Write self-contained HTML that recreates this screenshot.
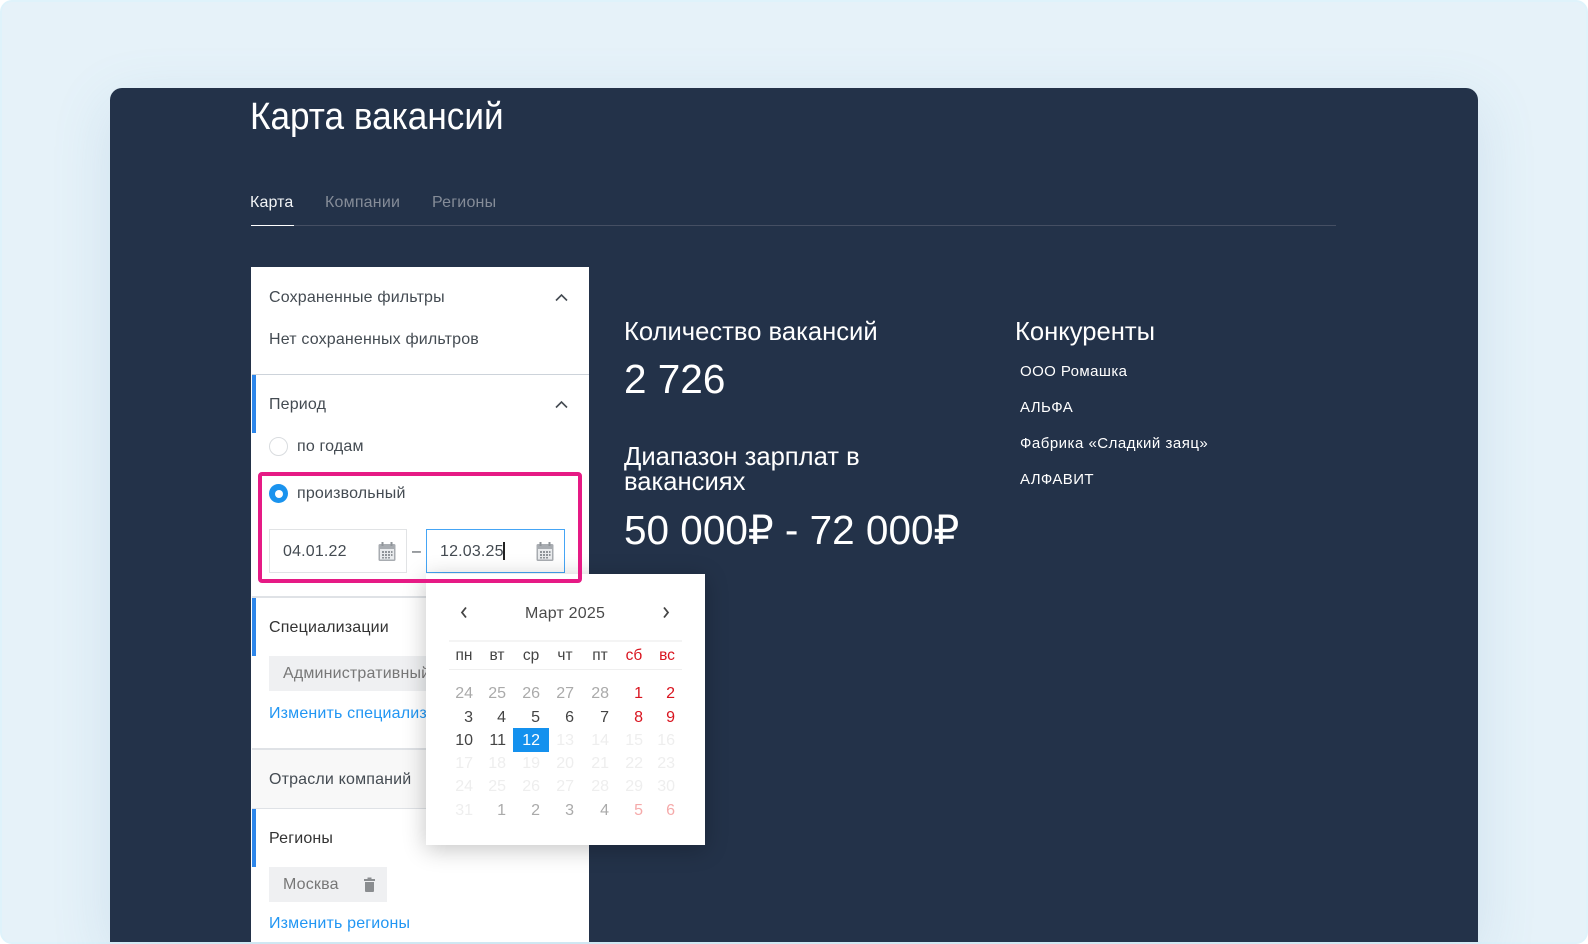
<!DOCTYPE html>
<html lang="ru"><head><meta charset="utf-8"><title>Карта вакансий</title>
<style>
html,body{margin:0;padding:0;width:1588px;height:944px;overflow:hidden;background:#fff}
body{font-family:"Liberation Sans",sans-serif;position:relative}
.abs,.t{position:absolute}
.t{white-space:nowrap;line-height:20px}
#outer{position:absolute;left:0;top:0;width:1584px;height:940px;background:#e6f2f9;border:2px solid #dff3fb;border-radius:12px;overflow:hidden}
#card{position:absolute;left:110px;top:88px;width:1368px;height:854px;background:#233249;border-radius:12px 12px 0 0;box-shadow:0 16px 60px rgba(90,140,180,.16)}
#panel{position:absolute;left:251px;top:267px;width:338px;height:675px;background:#fff;overflow:hidden}
.g{font-size:16px;color:#444b52;letter-spacing:.17px;margin-top:1px}
.w{color:#fff}
.bar{position:absolute;left:252px;width:4px;background:#2d86ea}
.line{position:absolute;left:252px;width:337px;background:#dfe2e6}
.chip{position:absolute;background:#eff0f2}
.inp{position:absolute;top:529px;height:42px;background:#fff;border:1px solid #e1e3e5}
.lnk{color:#2196f3;letter-spacing:.17px;margin-top:1px}
#pop{position:absolute;left:426px;top:574px;width:279px;height:271px;background:#fff;box-shadow:0 4px 22px rgba(0,0,0,.24)}
#pink{position:absolute;left:258px;top:472px;width:316px;height:103px;border:4px solid #e61a85;border-radius:4px}
.r{position:absolute;width:40px;text-align:right;font-size:16px;line-height:20px;margin-top:1px}
.h{position:absolute;width:44px;text-align:center;font-size:15.500px;line-height:20px;top:646px;color:#444}
.a{color:#aaa}.b{color:#444}.x{color:#d9141f}.d{color:#eeeeee}.p{color:#f5aaaa}
.c1{left:433px}.c2{left:466px}.c3{left:500px}.c4{left:534px}.c5{left:569px}.c6{left:603px}.c7{left:635px}
.y1{top:683px}.y2{top:707px}.y3{top:730px}.y4{top:753px}.y5{top:776px}.y6{top:800px}
.li{font-size:15px;letter-spacing:.42px}
.big{font-size:40.500px;line-height:48px}
.hd{font-size:25.600px;line-height:24px}
</style></head><body>
<div id="outer"></div>
<div id="card"></div>

<div class="t w" style="left:250px;top:96.500px;font-size:38px;line-height:40px;transform-origin:0 50%;transform:scaleX(.925)">Карта вакансий</div>
<div class="t" style="left:250px;top:193px;font-size:16px;letter-spacing:.12px;color:#f2f4f6">Карта</div>
<div class="t" style="left:325px;top:193px;font-size:16px;letter-spacing:.2px;color:#858c98">Компании</div>
<div class="t" style="left:432px;top:193px;font-size:16px;letter-spacing:.2px;color:#858c98">Регионы</div>
<div class="abs" style="left:251px;top:225px;width:1085px;height:1px;background:#454f63"></div>
<div class="abs" style="left:251px;top:225px;width:43px;height:1px;background:#fff"></div>

<div class="t w hd" style="left:624px;top:320px">Количество вакансий</div>
<div class="t w big" style="left:624px;top:355px">2 726</div>
<div class="t w hd" style="left:624px;top:445px;line-height:25px">Диапазон зарплат в<br>вакансиях</div>
<div class="t w big" style="left:624px;top:506px">50 000₽ - 72 000₽</div>
<div class="t w hd" style="left:1015px;top:320px">Конкуренты</div>
<div class="t w li" style="left:1020px;top:362px">ООО Ромашка</div>
<div class="t w li" style="left:1020px;top:398px">АЛЬФА</div>
<div class="t w li" style="left:1020px;top:434px;letter-spacing:.5px">Фабрика «Сладкий заяц»</div>
<div class="t w li" style="left:1020px;top:470px">АЛФАВИТ</div>

<div id="panel"></div>
<div class="abs" style="left:252px;top:750px;width:337px;height:58px;background:#f8f8f8"></div>
<div class="line" style="top:374px;height:1px;background:#cdd3da"></div>
<div class="line" style="top:596px;height:2px"></div>
<div class="line" style="top:748px;height:2px"></div>
<div class="line" style="top:808px;height:1px"></div>
<div class="bar" style="top:375px;height:58px"></div>
<div class="bar" style="top:598px;height:58px"></div>
<div class="bar" style="top:809px;height:58px"></div>

<div class="t g" style="left:269px;top:287px">Сохраненные фильтры</div>
<svg class="abs" style="left:555px;top:293px" width="13" height="9" viewBox="0 0 13 9"><path d="M1 7.500 6.500 2 12 7.500" fill="none" stroke="#444b52" stroke-width="1.600"/></svg>
<div class="t g" style="left:269px;top:329px">Нет сохраненных фильтров</div>
<div class="t g" style="left:269px;top:394px">Период</div>
<svg class="abs" style="left:555px;top:400px" width="13" height="9" viewBox="0 0 13 9"><path d="M1 7.500 6.500 2 12 7.500" fill="none" stroke="#444b52" stroke-width="1.600"/></svg>

<div class="abs" style="left:269px;top:437px;width:17px;height:17px;border:1px solid #d9dcdf;border-radius:50%;background:#fff"></div>
<div class="t g" style="left:297px;top:436px">по годам</div>
<div class="abs" style="left:269px;top:484px;width:19px;height:19px;border-radius:50%;background:#1a93ee"></div>
<div class="abs" style="left:274.500px;top:489.500px;width:8px;height:8px;border-radius:50%;background:#fff"></div>
<div class="t g" style="left:297px;top:483px">произвольный</div>

<div class="inp" style="left:269px;width:136px"></div>
<div class="t g" style="left:283px;top:541px">04.01.22</div>
<svg class="abs" style="left:378px;top:542px" width="18" height="19" viewBox="0 0 18 19"><rect x=".5" y="2" width="17" height="17" rx="1.500" fill="#a8acb1"/><rect x="2" y="7" width="14" height="10.500" fill="#e9ebed"/><rect x="3.500" y="0" width="2" height="4" fill="#8f9499"/><rect x="12.500" y="0" width="2" height="4" fill="#8f9499"/><path d="M4 9h2v2H4zM7 9h2v2H7zM10 9h2v2h-2zM13 9h1.500v2H13zM4 12h2v2H4zM7 12h2v2H7zM10 12h2v2h-2zM13 12h1.500v2H13zM4 15h2v1.500H4zM7 15h2v1.500H7zM10 15h2v1.500h-2z" fill="#8f9499"/></svg>
<div class="t g" style="left:412px;top:541px;font-size:16px">–</div>
<div class="inp" style="left:426px;width:137px;border-color:#45a5f5"></div>
<div class="t g" style="left:440px;top:541px">12.03.25</div>
<div class="abs" style="left:503px;top:542px;width:1.500px;height:18px;background:#222"></div>
<svg class="abs" style="left:536px;top:542px" width="18" height="19" viewBox="0 0 18 19"><rect x=".5" y="2" width="17" height="17" rx="1.500" fill="#a8acb1"/><rect x="2" y="7" width="14" height="10.500" fill="#e9ebed"/><rect x="3.500" y="0" width="2" height="4" fill="#8f9499"/><rect x="12.500" y="0" width="2" height="4" fill="#8f9499"/><path d="M4 9h2v2H4zM7 9h2v2H7zM10 9h2v2h-2zM13 9h1.500v2H13zM4 12h2v2H4zM7 12h2v2H7zM10 12h2v2h-2zM13 12h1.500v2H13zM4 15h2v1.500H4zM7 15h2v1.500H7zM10 15h2v1.500h-2z" fill="#8f9499"/></svg>

<div class="t g" style="left:269px;top:617px;color:#333">Специализации</div>
<div class="chip" style="left:269px;top:656px;width:170px;height:35px"></div>
<div class="t" style="left:283px;top:664px;font-size:16px;letter-spacing:.17px;color:#777">Административный</div>
<div class="t lnk" style="left:269px;top:703px;font-size:16px">Изменить специализации</div>
<div class="t g" style="left:269px;top:769px">Отрасли компаний</div>
<div class="t g" style="left:269px;top:828px;color:#333">Регионы</div>
<div class="chip" style="left:269px;top:867px;width:118px;height:35px"></div>
<div class="t" style="left:283px;top:875px;font-size:16px;letter-spacing:.17px;color:#777">Москва</div>
<svg class="abs" style="left:364px;top:877px" width="11" height="15" viewBox="0 0 11 15"><path d="M0 2h3.500V.5h4V2H11v2H0zM1 5h9v9a1 1 0 0 1-1 1H2a1 1 0 0 1-1-1z" fill="#8a8d90"/></svg>
<div class="t lnk" style="left:269px;top:913px;font-size:16px">Изменить регионы</div>

<div id="pop"></div>
<svg class="abs" style="left:460px;top:606px" width="8" height="13" viewBox="0 0 8 13"><path d="M6 1.500 2 6.500l4 5" fill="none" stroke="#444" stroke-width="1.800"/></svg>
<svg class="abs" style="left:662px;top:606px" width="8" height="13" viewBox="0 0 8 13"><path d="M2 1.500 6 6.500l-4 5" fill="none" stroke="#444" stroke-width="1.800"/></svg>
<div class="t" style="left:505px;top:603.500px;width:120px;text-align:center;font-size:16px;letter-spacing:.2px;color:#4a4a4a">Март 2025</div>
<div class="abs" style="left:449px;top:640px;width:233px;height:2px;background:#f4f4f4"></div>
<div class="abs" style="left:449px;top:669px;width:233px;height:1px;background:#efefef"></div>
<div class="h" style="left:442px">пн</div><div class="h" style="left:475px">вт</div><div class="h" style="left:509px">ср</div><div class="h" style="left:543px">чт</div><div class="h" style="left:578px">пт</div><div class="h" style="left:612px;color:#d9141f">сб</div><div class="h" style="left:645px;color:#d9141f">вс</div>
<div class="abs" style="left:513px;top:728px;width:36px;height:24px;background:#1491ee"></div>

<div class="r y1 c1 a">24</div><div class="r y1 c2 a">25</div><div class="r y1 c3 a">26</div><div class="r y1 c4 a">27</div><div class="r y1 c5 a">28</div><div class="r y1 c6 x">1</div><div class="r y1 c7 x">2</div>
<div class="r y2 c1 b">3</div><div class="r y2 c2 b">4</div><div class="r y2 c3 b">5</div><div class="r y2 c4 b">6</div><div class="r y2 c5 b">7</div><div class="r y2 c6 x">8</div><div class="r y2 c7 x">9</div>
<div class="r y3 c1 b">10</div><div class="r y3 c2 b">11</div><div class="r y3 c3" style="color:#fff">12</div><div class="r y3 c4 d">13</div><div class="r y3 c5 d">14</div><div class="r y3 c6 d">15</div><div class="r y3 c7 d">16</div>
<div class="r y4 c1 d">17</div><div class="r y4 c2 d">18</div><div class="r y4 c3 d">19</div><div class="r y4 c4 d">20</div><div class="r y4 c5 d">21</div><div class="r y4 c6 d">22</div><div class="r y4 c7 d">23</div>
<div class="r y5 c1 d">24</div><div class="r y5 c2 d">25</div><div class="r y5 c3 d">26</div><div class="r y5 c4 d">27</div><div class="r y5 c5 d">28</div><div class="r y5 c6 d">29</div><div class="r y5 c7 d">30</div>
<div class="r y6 c1 d">31</div><div class="r y6 c2 a">1</div><div class="r y6 c3 a">2</div><div class="r y6 c4 a">3</div><div class="r y6 c5 a">4</div><div class="r y6 c6 p">5</div><div class="r y6 c7 p">6</div>

<div id="pink"></div>
</body></html>
